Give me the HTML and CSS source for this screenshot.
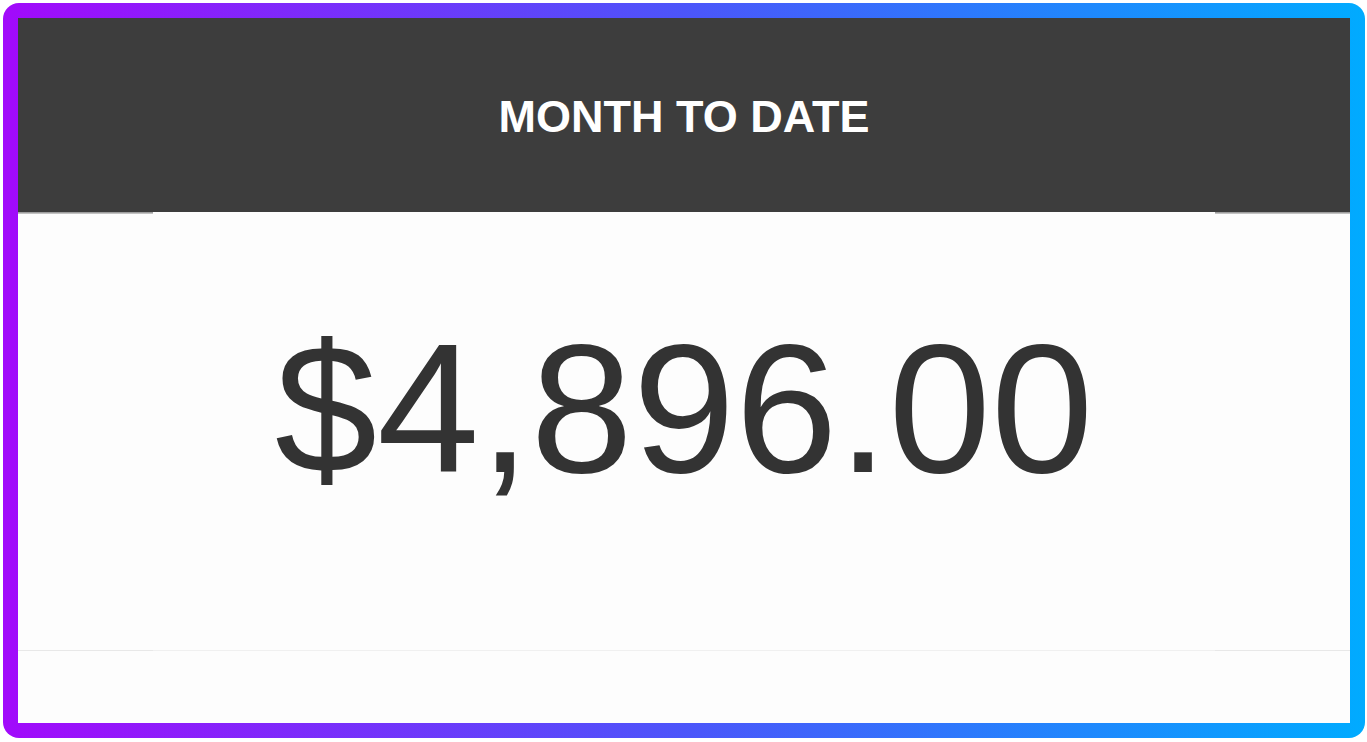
FILE: index.html
```html
<!DOCTYPE html>
<html>
<head>
    <title>Month to Date</title>
    <link rel="stylesheet" href="styles.css">
</head>
<body>
    <div class="frame">
        <div class="widget">
            <div class="widget-header">
                <h1 class="widget-title">MONTH TO DATE</h1>
            </div>
            <div class="widget-body">
                <div class="edge-shadow">
                    <span class="edge edge-dark"></span>
                    <span class="edge-gap"></span>
                    <span class="edge edge-dark"></span>
                </div>
                <div class="amount">$4,896.00</div>
            </div>
            <div class="divider">
                <span class="edge edge-light"></span>
                <span class="edge-gap"></span>
                <span class="edge edge-light"></span>
            </div>
            <div class="widget-footer"></div>
        </div>
    </div>
</body>
</html>
```

FILE: styles.css
```css
body {
    margin: 0;
    background-color: #ffffff;
    font-family: "Liberation Sans", Arial, sans-serif;
}
.frame {
    width: 1362px;
    height: 735px;
    margin: 3px 0 0 3px;
    padding: 15px;
    box-sizing: border-box;
    border-radius: 16px;
    background: linear-gradient(90deg, #a20afb 0%, #4c55fa 50%, #00abff 100%);
}
.widget {
    height: 100%;
    display: flex;
    flex-direction: column;
    background-color: #fdfdfd;
}
.widget-header {
    height: 194px;
    padding-top: 76px;
    box-sizing: border-box;
    background-color: #3d3d3d;
    text-align: center;
}
.widget-title {
    margin: 0;
    color: #ffffff;
    font-size: 45px;
    line-height: 1;
    font-weight: bold;
}
.widget-body {
    height: 438px;
}
.edge-shadow, .divider {
    display: flex;
}
.edge-shadow {
    height: 2px;
}
.edge {
    width: 135px;
}
.edge-gap {
    flex: 1;
}
.edge-dark {
    background: linear-gradient(180deg, #8c8c8c, #d4d4d4);
}
.edge-light {
    background-color: #e8e8e8;
}
.divider {
    height: 1px;
    background-color: #f0f0f0;
}
.amount {
    margin-top: 102px;
    color: #333333;
    font-size: 184px;
    line-height: 1;
    text-align: center;
}
.widget-footer {
    flex: 1;
}
```
